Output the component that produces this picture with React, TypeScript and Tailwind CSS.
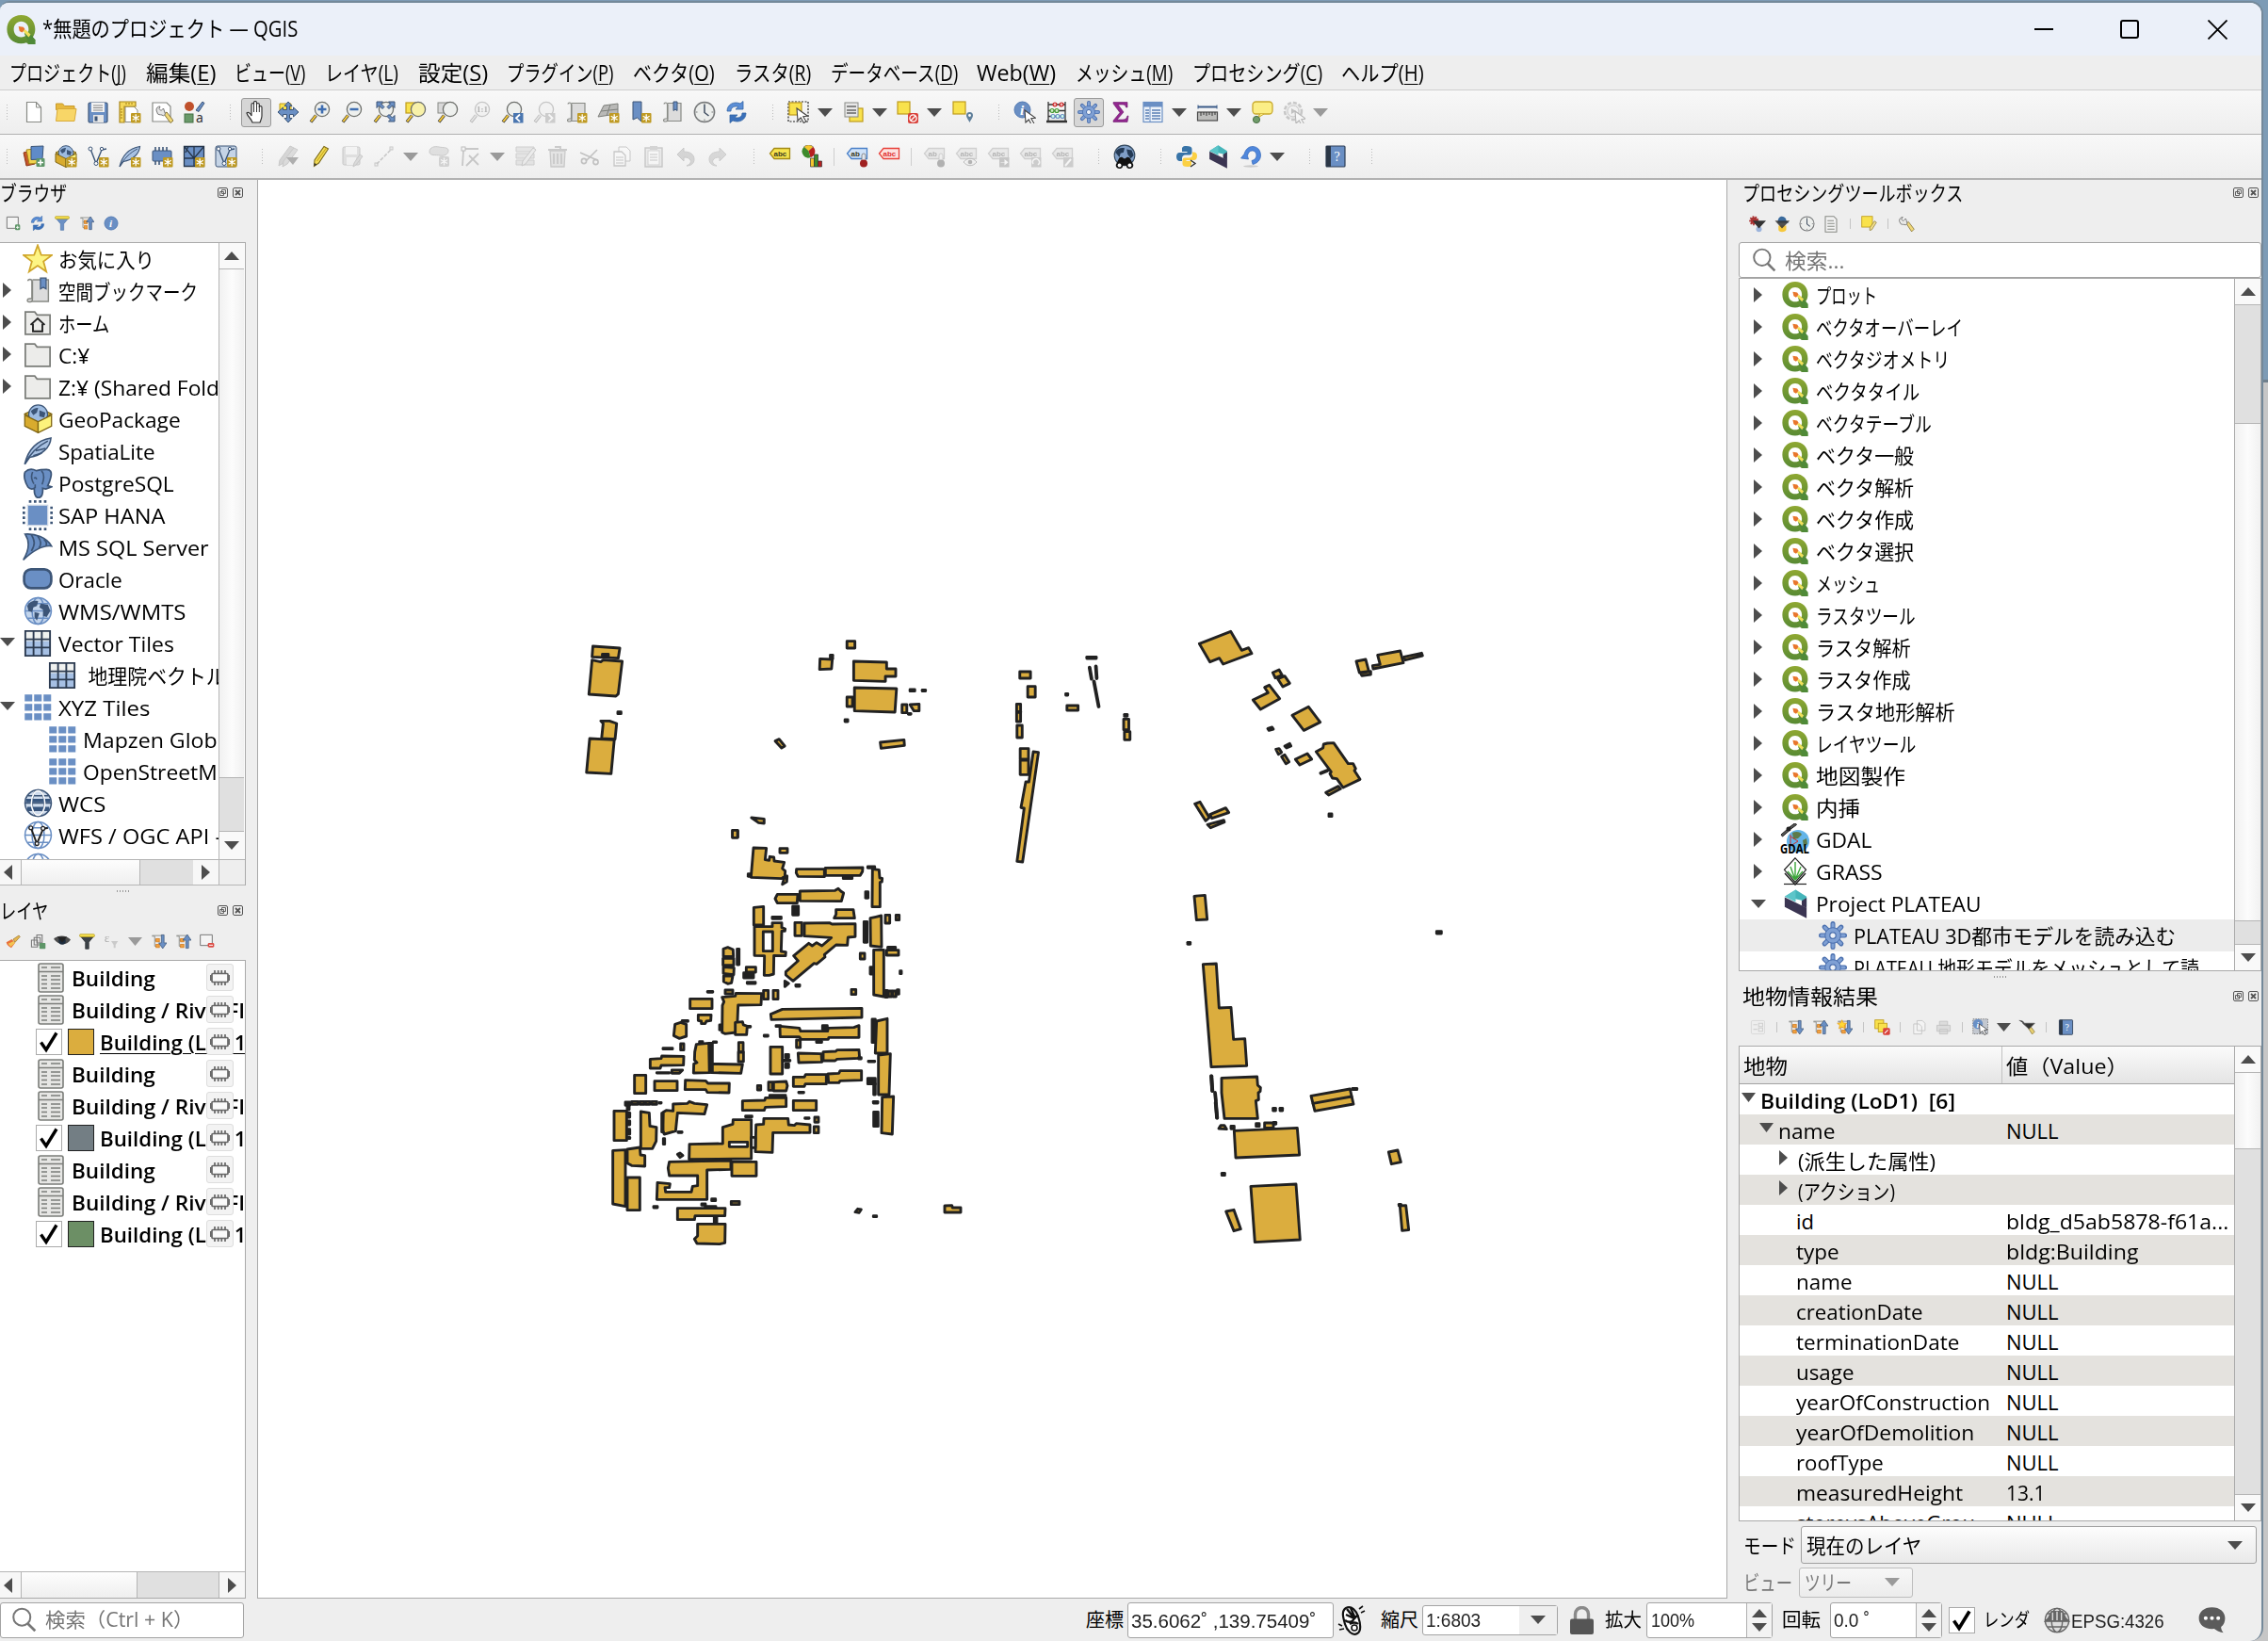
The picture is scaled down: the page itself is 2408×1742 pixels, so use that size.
import React, { useLayoutEffect, useRef, useState } from "react";

type Kids = { children?: React.ReactNode };

/* Text squeezed or stretched horizontally to a given advance width. */
function Fit({ w, children, className = "" }: { w: number; className?: string } & Kids) {
  const ref = useRef<HTMLSpanElement>(null);
  const [s, setS] = useState(1);
  useLayoutEffect(() => {
    if (ref.current && ref.current.offsetWidth) setS(w / ref.current.offsetWidth);
  }, [w]);
  return (
    <span className="inline-block shrink-0 whitespace-pre" style={{ width: w }}>
      <span ref={ref} className={"inline-block origin-left " + className} style={{ transform: `scaleX(${s})` }}>
        {children}
      </span>
    </span>
  );
}

function I({ s = 24, children, dim }: { s?: number; dim?: boolean } & Kids) {
  return (
    <svg viewBox="0 0 24 24" width={s} height={s} className={dim ? "shrink-0 opacity-35 grayscale" : "shrink-0"} fill="none">
      {children}
    </svg>
  );
}

/* ---------- shared icon parts ---------- */
const B = "#6a8fc4";
const D = "#3c5577";
const G = "#888a85";
const Badge = () => (
  <g>
    <rect x="13" y="13" width="10.500" height="10.500" rx="1" fill="#bf9a22" />
    <path d="M18.200 14.200v8M14.700 16.200l7 4M21.700 16.200l-7 4" stroke="#fff" strokeWidth="1.300" />
  </g>
);
const Lens = ({ fill = "#eef0ee" }: { fill?: string }) => (
  <g>
    <path d="M2 22.500l5.500-7" stroke="#3b3b3b" strokeWidth="3.400" />
    <path d="M2.300 22l5-6.300" stroke="#f5c93a" strokeWidth="2" />
    <circle cx="14" cy="9" r="7.600" fill={fill} stroke="#6e706c" strokeWidth="1.300" />
  </g>
);
const Book = ({ x = 0 }: { x?: number }) => (
  <g transform={`translate(${x} 0)`}>
    <path d="M3 3.500c0-2 3.500-2 3.500 0V19H4.500C2 19 2 22 4 22h1c1.500 0 2-1 2-3V3.500M7 2.500h14V21.500H5.500" fill="#dcdcdc" stroke={G} strokeWidth="1.200" />
  </g>
);
const Tree = () => (
  <g>
    <path d="M2 4h4v15M6 10h4M6 19h4" stroke="#8a8c88" strokeWidth="1.300" />
    <rect x="8" y="7.500" width="5" height="5" fill="#f0a040" stroke="#d07818" />
    <rect x="8" y="16" width="5" height="5" fill="#f0a040" stroke="#d07818" />
    <path d="M2 3h18" stroke="#8a8c88" strokeWidth="1.300" />
  </g>
);
const Cursor = ({ x = 10, y = 8 }: { x?: number; y?: number }) => (
  <path transform={`translate(${x} ${y})`} d="M0 0l1 13 3.300-3 3 5.500 2.500-1.500-3-5.200 4.700-.6z" fill="#fff" stroke="#444" strokeWidth="1.100" />
);
const Tag = ({ fill, stroke, t }: { fill: string; stroke: string; t: string }) => (
  <g>
    <path d="M1.500 9L6 3.500h16.500v11H6z" fill={fill} stroke={stroke} strokeWidth="1.300" />
    <text x="5.500" y="12" fontSize="8" fontWeight="700" fontFamily="Liberation Sans, sans-serif" fill={stroke === "#e8403a" ? "#e03030" : "#3a3a20"}>
      {t}
    </text>
  </g>
);
const Therm = () => (
  <g>
    <rect x="17" y="9" width="4" height="10" rx="2" fill="#dfe6ee" stroke="#777" strokeWidth=".8" />
    <circle cx="19" cy="19.500" r="4" fill="#a02020" />
  </g>
);
const GlobeArt = ({ c = B, f = "#dfe8f3" }: { c?: string; f?: string }) => (
  <g stroke={c} strokeWidth="1.200">
    <circle cx="12" cy="12" r="10.800" fill={f} />
    <ellipse cx="12" cy="12" rx="5" ry="10.800" />
    <path d="M1.500 12h21M3.500 6h17M3.500 18h17" />
  </g>
);
const Land = () => (
  <path d="M3 8c2-4 6-5 9-4l-1 4-3 1-1 4-3-1zM9 13l4 1-2 6-2-3zM14 6l6 1 2 5-3 5-3-1 0-5-3-2z" fill={D} />
);

/* ---------- full icons ---------- */
function QLogo({ s = 30 }: { s?: number }) {
  return (
    <I s={s}>
      <defs>
        <linearGradient id="qg" x1="0" y1="0" x2="0" y2="1">
          <stop offset="0" stopColor="#8fa832" />
          <stop offset="1" stopColor="#578a33" />
        </linearGradient>
      </defs>
      <path fillRule="evenodd" fill="url(#qg)" d="M12 0C18.800 0 23.500 4.800 23.500 11.700c0 2.500-.7 4.600-2 6.400l2 2.200V24h-5.600l-1.600-1.300A12 12 0 0 1 12 23.500C5 23.500.3 18.500.3 11.700.3 5 5 0 12 0zm0 5.200C8.300 5.200 5.900 8 5.900 11.700s2.200 6.500 6.100 6.500c3.900 0 6.100-2.800 6.100-6.500S15.700 5.200 12 5.200z" />
      <path d="M14.500 15l3.500-1.500 5.500 6.800V24h-4.500z" fill="#4f8a38" />
      <path d="M13.200 13l5 5.200 1.600-2.400-4.200-3.800z" fill="#f0e05a" />
      <path d="M9.800 9.300l4 .5 1.300 1.900-2.300 2.600-2.200-1.200z" fill="#e8762c" />
    </I>
  );
}
const Gear = ({ s = 24, c = "#7fa0d4" }: { s?: number; c?: string }) => (
  <I s={s}>
    <path d="M12 2v20M2 12h20M4.900 4.900l14.200 14.200M19.100 4.900L4.900 19.100" stroke="#4a6fae" strokeWidth="4" strokeLinecap="round" />
    <path d="M12 2.300v19.400M2.300 12h19.400M5.200 5.200l13.600 13.600M18.800 5.200L5.200 18.800" stroke={c} strokeWidth="2.400" strokeLinecap="round" />
    <circle cx="12" cy="12" r="6.600" fill={c} stroke="#4a6fae" strokeWidth=".8" />
    <circle cx="12" cy="12" r="2.600" fill="#eef2f8" stroke="#4a6fae" strokeWidth="1" />
  </I>
);
const Plateau = ({ s = 24 }: { s?: number }) => (
  <I s={s}>
    <path d="M3 6L12 .300l9 5.700v8l-4-2V9z" fill="#45b5ba" />
    <path d="M12 .3v10.200L3 6z" fill="#5cc5c9" />
    <path d="M3 6.500l18 8.700v8.600L3 14.500z" fill="#3b3552" />
    <path d="M17 9.500l4-2.500v8.500l-4-2z" fill="#3b3552" />
  </I>
);
const Refresh = ({ s = 24 }: { s?: number }) => (
  <I s={s}>
    <path d="M2 11C2 4 9 0 16 3l3-2.500V9h-8l3-2.500C10 5 6 7 6 11z" fill="#5b8ed6" stroke="#3465a4" strokeWidth=".8" />
    <path d="M22 13c0 7-7 11-14 8l-3 2.500V15h8l-3 2.500c4 1.500 8-.5 8-4.500z" fill="#3a70ba" stroke="#3465a4" strokeWidth=".8" />
  </I>
);
const Funnel = ({ s = 24, dark }: { s?: number; dark?: boolean }) => (
  <I s={s}>
    <path d="M1.500 3.500h21L14.500 13v10h-5V13z" fill={dark ? "#3c4248" : B} stroke={dark ? "#25282b" : "#4f76ab"} />
    <rect x="1" y="1" width="22" height="4" rx="1" fill="#f5e04c" stroke="#b89c1a" />
  </I>
);
const Info = ({ s = 24 }: { s?: number }) => (
  <I s={s}>
    <circle cx="12" cy="12" r="10.500" fill={B} stroke="#527ab3" strokeWidth="1.400" />
    <text x="9" y="18" fontSize="17" fontStyle="italic" fontWeight="700" fontFamily="Liberation Serif, serif" fill="#fff">i</text>
  </I>
);
const TreeUp = ({ s = 24 }: { s?: number }) => (
  <I s={s}>
    <Tree />
    <path d="M16 22V10h-4.500L18 1.500l6 8.500h-4v12z" fill={B} stroke={D} />
  </I>
);
const TreeDown = ({ s = 24, star }: { s?: number; star?: boolean }) => (
  <I s={s}>
    <Tree />
    <path d="M16 2v12h-4l6 8.500 6-8.500h-4V2z" fill={B} stroke={D} />
    {star && <path d="M8 1l2 4.500 5 .5-3.700 3.300L12.500 14 8 11.500 3.500 14l1.200-4.700L1 6l5-.5z" fill="#ffd835" stroke="#e59a1c" />}
  </I>
);
const HelpBook = ({ s = 24 }: { s?: number }) => (
  <I s={s}>
    <rect x="2" y="1" width="20" height="22" rx="1" fill={B} stroke="#2e3f56" strokeWidth="1.200" />
    <rect x="2" y="1" width="5" height="22" fill="#2b3746" />
    <text x="10.500" y="17" fontSize="14" fontFamily="Liberation Serif, serif" fill="#fff">?</text>
  </I>
);
const Wrench = ({ s = 24 }: { s?: number }) => (
  <I s={s}>
    <path d="M12 11l3-2.500 8 10.500-3.500 3.500z" fill="#f0d878" stroke="#85733a" strokeWidth="1.100" />
    <path d="M2 7.500c0-3 2-5.500 5-5.500L5 5l2.500 2.500L11 4c2 3 1 5 2.500 7L11 13C8.500 12 6 13 4 11.500z" fill="#e8e8e6" stroke="#777" strokeWidth="1.200" />
  </I>
);
const Clock = ({ s = 24 }: { s?: number }) => (
  <I s={s}>
    <circle cx="12" cy="12" r="10.600" fill="#eceeec" stroke="#77797a" strokeWidth="1.500" />
    <path d="M12 4v8.500l4.500 3.500" stroke="#3f4d60" strokeWidth="1.500" />
    <path d="M12 2.500v2M12 19.500v2M2.500 12h2M19.500 12h2" stroke="#77797a" />
  </I>
);
const Fold = ({ home }: { home?: boolean }) => (
  <I s={30}>
    <path d="M1.500 2.500h8l2 2.500h11v16.500h-21z" fill="#ececea" stroke="#7b7d79" strokeWidth="1.400" />
    {home && <path d="M6 13.500L12 8l6 5.500M8 12.500V19h8v-6.500" stroke="#222" strokeWidth="1.500" />}
  </I>
);
const Star = () => (
  <I s={32}>
    <path d="M12 1l2.800 7.700 8.400.2-6.600 5 2.300 8.100L12 17.300 5.100 22l2.300-8.100-6.600-5 8.400-.2z" fill="#fdf584" stroke="#d0a62a" strokeWidth="1.300" />
  </I>
);
const Feather = ({ s = 24 }: { s?: number }) => (
  <I s={s}>
    <path d="M1 23C3 14 8 4 22.500 1.500 22 9 15 16 5 17.500z" fill="#a8c1e2" stroke={D} strokeWidth="1.200" />
    <path d="M1 23C5 15 12 8 20 4M8 16l7-2M10 12l8-2" stroke={D} strokeWidth="1.200" />
  </I>
);
const GeoPack = ({ s = 24, badge }: { s?: number; badge?: boolean }) => (
  <I s={s}>
    <path d="M1 8l11-5 11 5-11 6z" fill="#e9c84a" stroke="#7f6410" />
    <circle cx="12" cy="8.500" r="7.800" fill="#9dbbe0" stroke={D} />
    <path d="M6 6c2-3 5-3 6-3l-1 4-3 2zM13 5l5 2-1 4-4-1z" fill={D} />
    <path d="M1 9l11 5.500v9L1 18z" fill="#d8ab2e" stroke="#7f6410" />
    <path d="M23 9l-11 5.500v9L23 18z" fill="#fdf27c" stroke="#7f6410" />
    {badge && <Badge />}
  </I>
);
const Elephant = () => (
  <I s={32}>
    <path d="M2 3c3-3 7-2 9-1 3-1 6-1 8-1 3 0 4.500 2 3.500 6-.6 2.500-1.500 5-2.500 7l3 .8-4.500 1.700-2.500-.5c.3 4-.5 7.500-3.500 7.500-2.800 0-3.300-4-3.200-7.500-1.500.8-3.300 1-5-1C2 11.500.5 6 2 3z" fill={B} stroke={D} strokeWidth="1.300" />
    <path d="M8 3c-1.500 3-.5 7 1 9.500M15 2c3 3 2 7 .5 11M10 13v3M9 8c1.500-1 2-.5 2 1" stroke={D} strokeWidth="1.200" />
  </I>
);
const Hana = () => (
  <I s={32}>
    <rect x="4" y="4" width="16" height="16" fill={B} stroke="#c9d4e4" />
    <path d="M5 1h15M5 23h15" stroke={D} strokeWidth="2" strokeDasharray="2 2" />
    <path d="M1 5v15M23 5v15" stroke={D} strokeWidth="2" strokeDasharray="2 2" />
  </I>
);
const Sail = () => (
  <I s={32}>
    <path d="M2 1.500C10 1 19 4 23 11c-7-1-14 3-22.500 11C6 13 5 6 2 1.500z" fill={B} stroke={D} strokeWidth="1.200" />
    <path d="M7 2c3 5 3 8 0 13M12 3c3 4 3 7 1 9.500M17 5.500c2 2 2.500 4 1.500 5.500" stroke={D} strokeWidth="1.300" />
  </I>
);
const Ora = () => (
  <I s={32}>
    <rect x="1.200" y="4" width="21.600" height="15" rx="5.500" fill={B} stroke={D} strokeWidth="2" />
  </I>
);
const GridDark = () => (
  <I s={30}>
    <rect x="1.500" y="1.500" width="21" height="21" fill="#f0f2f0" />
    <rect x="1.500" y="10" width="21" height="12.500" fill="#a6c0e4" />
    <path d="M1.500 1.500h21v21h-21zM8.500 1.500v21M15.500 1.500v21M1.500 8.500h21M1.500 15.500h21" stroke="#2b3a50" strokeWidth="1.500" />
  </I>
);
const GridBlue = () => (
  <I s={30}>
    {[1, 9, 17].map((y) => [1, 9, 17].map((x) => <rect key={x + "-" + y} x={x} y={y} width="6.400" height="5.800" fill={B} />))}
  </I>
);
const VLayer = ({ s = 24, badge, bg }: { s?: number; badge?: boolean; bg?: boolean }) => (
  <I s={s}>
    {bg && <rect x="1" y="1" width="22" height="22" rx="2" fill="#c5d4e6" stroke={D} />}
    <path d="M4 4l6 15.500L16 5l5-1" stroke={D} strokeWidth="1.400" />
    <path d="M4 4m-2 0a2 2 0 1 0 4 0a2 2 0 1 0-4 0M10 19.500m-2 0a2 2 0 1 0 4 0a2 2 0 1 0-4 0M16 4m-1.700 0a1.700 1.700 0 1 0 3.400 0a1.700 1.700 0 1 0-3.400 0" fill="#fff" stroke={D} />
    {badge && <Badge />}
  </I>
);

/* ---------- widgets ---------- */
const Grip = ({ first }: { first?: boolean }) => (
  <div className={first ? "w-[18.5px] shrink-0 pl-[6px]" : "w-8 shrink-0 pl-[20px]"}>
    <div className="h-[18px] w-[4px] bg-[radial-gradient(#bbb_0.8px,transparent_1px)] bg-[length:3px_3px]" />
  </div>
);
const C = ({ children, on }: { on?: boolean } & Kids) => (
  <div className="flex w-[34px] shrink-0 items-center justify-center">
    {on ? <div className="flex h-[31px] w-[32px] items-center justify-center rounded-[3px] border border-[#9a9a9a] bg-[#d6d6d6]">{children}</div> : children}
  </div>
);
const Tri = ({ c = "#4d4d4d", w = 16, h = 9 }: { c?: string; w?: number; h?: number }) => (
  <svg width={w} height={h} viewBox="0 0 16 9" preserveAspectRatio="none" className="shrink-0">
    <path d="M0 0h16L8 9z" fill={c} />
  </svg>
);
const TriUp = () => (
  <svg width={16} height={9} viewBox="0 0 16 9" className="shrink-0">
    <path d="M0 9h16L8 0z" fill="#4d4d4d" />
  </svg>
);
const TriR = () => (
  <svg width={9} height={16} viewBox="0 0 9 16" className="shrink-0">
    <path d="M0 0v16l9-8z" fill="#4d4d4d" />
  </svg>
);
const TriL = () => (
  <svg width={9} height={16} viewBox="0 0 9 16" className="shrink-0">
    <path d="M9 0v16L0 8z" fill="#4d4d4d" />
  </svg>
);
const DD = ({ dim }: { dim?: boolean }) => (
  <div className="flex w-6 shrink-0 justify-center pr-[2px]">
    <Tri c={dim ? "#9a9a9a" : "#4d4d4d"} />
  </div>
);
const Sep = () => (
  <div className="flex w-[14px] shrink-0 justify-center">
    <div className="h-[19px] w-px bg-[#cfcfcf]" />
  </div>
);

const Sq = ({ x = 2, y = 1, s = 14 }: { x?: number; y?: number; s?: number }) => (
  <rect x={x} y={y} width={s} height={s} fill="#f9e24c" stroke="#bf9c1c" strokeWidth="1.200" />
);

function ToolbarOne() {
  return (
    <div className="flex h-[47px] shrink-0 items-center border-b border-[#b1b1b1] bg-gradient-to-b from-[#f8f8f8] to-[#eeeeee]">
      <Grip first />
      <C><I><path d="M4.500 1.500h10l5 5.500v15.500h-15z" fill="#fff" stroke={G} strokeWidth="1.200" /><path d="M14.500 1.500V7h5" stroke={G} /></I></C>
      <C><I><path d="M1.500 3h7l2 2.500H21v4H1.500z" fill="#e7b93e" stroke="#c99a2c" /><path d="M1.500 21.500L3 8.500h20l-2 13z" fill="#f8d667" stroke="#d8aa3a" /></I></C>
      <C><I><rect x="2" y="2" width="20" height="21" rx="1.500" fill={B} stroke={D} strokeWidth="1.200" /><rect x="5" y="2" width="14" height="10" fill="#f2f2f2" /><path d="M7 5h10M7 7.500h10M7 10h10" stroke="#888" /><rect x="7" y="15" width="11" height="8" fill="#e6e6e6" /><rect x="8.500" y="16.500" width="3" height="5" fill={D} /></I></C>
      <C><I><path d="M7 6h9l4 4v12.500H7z" fill="#fff" stroke={G} /><path d="M1 1h17v5H6v17H1z" fill="#f5d85a" stroke="#a8851a" strokeWidth="1.200" /><path d="M8 2v2M11 2v2M14 2v2M2 9h2M2 12h2M2 15h2M2 18h2" stroke="#a07c12" /><Badge /></I></C>
      <C><I><path d="M2 2h15l4 4v16H2z" fill="#fff" stroke={G} strokeWidth="1.200" /><path d="M14 14l3-2 7 9-3 2.500z" fill="#f0d878" stroke="#85733a" /><path d="M6 10c0-3 2-4 4-4L9 8.500l2 2L13.500 8c1 2 1 4 2 6l-2 2c-2-2-4-.5-6-2z" fill="#e6e6e6" stroke="#777" /></I></C>
      <C><I><circle cx="7" cy="6" r="5" fill="#c0512c" /><path d="M14 10l7-9 2 1.500-6 9z" fill={B} stroke={D} /><rect x="2" y="14" width="9" height="9" fill="#6a9a6a" stroke="#457045" /><text x="14" y="23" fontSize="14" fontFamily="Noto Sans, sans-serif" fill="#333">a</text></I></C>
      <Grip />
      <C on><I><path d="M8 23c-1-4-5-6-6-10 1.500-1.500 3.500 0 5 3V4c0-2 2.500-2 2.500 0V2c0-2 3-2 3 0v2c0-2 2.800-2 2.800 0v3c0-2 2.700-1.700 2.700 0v9c0 3-1.500 5-2 7z" fill="#fff" stroke="#333" strokeWidth="1.200" /><path d="M9.500 4v8M12.500 4v8M15.300 6v6" stroke="#333" /></I></C>
      <C><I><path d="M3 3h12v10H3z" fill="#f9e24c" stroke="#bf9c1c" /><path d="M12 1l4 4.500h-2.500v4h4V7L23 12l-5.500 5v-2.500h-4v4H16L12 23l-4-4.500h2.500v-4h-4V17L1 12l5.500-5v2.500h4v-4H8z" fill={B} stroke={D} /></I></C>
      <C><I><Lens /><path d="M14 4.500v9M9.500 9h9" stroke="#3e6db0" strokeWidth="2.600" /></I></C>
      <C><I><Lens /><path d="M9.500 9h9" stroke="#3e6db0" strokeWidth="2.600" /></I></C>
      <C><I><Lens /><path d="M4 1h6.500L8.500 3l3.500 3.500L10 8.500 6.500 5 4 7.500zM23 1v6.500L20.500 5 17 8.500 15 6.500 18.500 3l-2-2zM23 22h-6.500l2-2L15 16.500l2-2 3.500 3.500 2.500-2.500zM10.500 10.500" fill={B} stroke={D} /></I></C>
      <C><I><Sq x={1} y={2} s={11} /><Lens fill="#f8f1a8" /></I></C>
      <C><I><rect x="1" y="2" width="11" height="11" fill="#d8d8d8" stroke={G} /><Lens /></I></C>
      <C><I dim><Lens /><text x="8" y="12" fontSize="9" fontWeight="700" fontFamily="Liberation Serif, serif" fill="#333">1:1</text></I></C>
      <C><I><Lens /><rect x="13" y="13" width="10.500" height="10.500" fill="#4a76b0" /><path d="M20 14.500l-4 3.800 4 3.800" stroke="#fff" strokeWidth="1.800" /></I></C>
      <C><I dim><Lens /><rect x="13" y="13" width="10.500" height="10.500" fill="#888" /><path d="M16.500 14.500l4 3.800-4 3.800" stroke="#fff" strokeWidth="1.800" /></I></C>
      <C><I><Book /><Badge /></I></C>
      <C><I><path d="M1 17L7 5l15-2v14l-8-2z" fill="#b9b9b7" stroke="#7d7f7b" /><path d="M4 11l18-2M14 4L10 16" stroke="#7d7f7b" /><Badge /></I></C>
      <C><I><path d="M4 1h9v21l-4.500-4L4 20z" fill={B} stroke={D} /><Badge /></I></C>
      <C><I><Book /><path d="M13 1h4v9.500l-2-1.500-2 1.500z" fill={B} stroke={D} /></I></C>
      <C><Clock /></C>
      <C><Refresh /></C>
      <Grip />
      <C><I><rect x="1" y="1" width="21" height="21" stroke="#222" strokeWidth="1.200" strokeDasharray="2 1.500" /><Sq x={2} y={2} s={13} /><Cursor /></I></C>
      <DD />
      <C><I><Sq x={8} y={8} s={14} /><rect x="3" y="2" width="14" height="15" fill="#e8e8e8" stroke={G} /><path d="M5 6h10M5 10h10M5 13h10" stroke="#666" strokeWidth="1.300" /></I></C>
      <DD />
      <C><I><Sq x={1} y={1} s={13} /><rect x="12" y="13" width="11" height="11" rx="2" fill="#d9413a" /><circle cx="17.500" cy="18.500" r="3.600" stroke="#fff" strokeWidth="1.300" /><path d="M15 21l5-5" stroke="#fff" strokeWidth="1.300" /></I></C>
      <DD />
      <C><I><Sq x={2} y={1} s={13} /><path d="M19.500 23c-2-4-3.500-5.500-3.500-7.500a3.500 3.500 0 0 1 7 0c0 2-1.500 3.500-3.500 7.500z" fill="#5f7f9a" /><circle cx="19.500" cy="15.500" r="1.400" fill="#fff" /></I></C>
      <Grip />
      <C><I><circle cx="9.500" cy="9.500" r="8.500" fill={B} stroke="#527ab3" /><text x="7" y="15" fontSize="15" fontStyle="italic" fontWeight="700" fontFamily="Liberation Serif, serif" fill="#fff">i</text><Cursor x={12} y={10} /></I></C>
      <C><I><path d="M3 1v21M21 1v21M3 4h18M3 10.500h18M3 16.500h18" stroke="#333" strokeWidth="1.300" /><path d="M1 22h22" stroke="#333" strokeWidth="2.400" /><g strokeWidth="1.200"><circle cx="10" cy="4" r="2" fill="#f2b5b5" stroke="#c22" /><circle cx="17" cy="4" r="2" fill="#f2b5b5" stroke="#c22" /><circle cx="7" cy="10.500" r="2" fill="#cdeac6" stroke="#493" /><circle cx="12" cy="10.500" r="2" fill="#cdeac6" stroke="#493" /><circle cx="8" cy="16.500" r="2" fill="#cfe" stroke={B} /><circle cx="13" cy="16.500" r="2" fill="#cfe" stroke={B} /><circle cx="18" cy="16.500" r="2" fill="#cfe" stroke={B} /></g></I></C>
      <C on><Gear s={24} /></C>
      <C><I><path d="M4 1.500h15V7h-1.500C17 4.500 16 4 13 4H9l6 8-7 8h6c3 0 4-1 5-4h1l-1 6.500H4v-1.500L11 12.500 4 3z" fill="#92278f" stroke="#6b1a6b" strokeWidth=".6" /></I></C>
      <C><I><rect x="2" y="1.500" width="20" height="21" fill="#eef3fa" stroke={B} strokeWidth="1.200" /><rect x="2" y="1.500" width="20" height="5" fill={B} /><path d="M9 1.500v21" stroke={B} /><path d="M4 10h4M4 13h4M4 16h4M4 19h4M11 10h9M11 13h9M11 16h9M11 19h9" stroke="#5a7fb4" strokeWidth="1.400" /></I></C>
      <DD />
      <C><I><path d="M2 6.500h20" stroke="#3b5b88" strokeWidth="2.200" /><path d="M2 4.500v4M22 4.500v4" stroke="#3b5b88" /><rect x="1.500" y="12" width="21" height="9" fill="#bdbdbb" stroke="#4a4a4a" strokeWidth="1.200" /><path d="M5 12v4M8 12v3M11 12v4M14 12v3M17 12v4M20 12v3" stroke="#333" /></I></C>
      <DD />
      <C><I><rect x="2" y="1" width="21" height="13" rx="3.500" fill="#fbee86" stroke="#c9a92c" strokeWidth="1.300" /><path d="M10 14l-4 5 8-5" fill="#fbee86" stroke="#c9a92c" /><circle cx="6" cy="20" r="3.600" fill="#6f9c69" stroke="#4b6f46" /></I></C>
      <C><I dim><circle cx="11" cy="11" r="9" fill="#ddd" stroke="#777" strokeWidth="2.500" strokeDasharray="4 2" /><circle cx="11" cy="11" r="6" fill="#eee" stroke="#777" /><path d="M9 8l5 3-5 3z" fill="#666" /><Cursor x={13} y={11} /></I></C>
      <DD dim />
    </div>
  );
}

const DimTag = ({ children, t = "abc" }: { t?: string } & Kids) => (
  <I dim>
    <Tag fill="#d8d6c8" stroke="#8f8f80" t={t} />
    {children}
  </I>
);

function ToolbarTwo() {
  return (
    <div className="flex h-[48px] shrink-0 items-center border-b-2 border-[#b1b1b1] bg-gradient-to-b from-[#f8f8f8] to-[#eeeeee]">
      <Grip first />
      <C><I><path d="M1 8l8-2 4 14-9 2z" fill="#c4542c" stroke="#8c3512" /><path d="M4 5l9-1 3 15-9 1z" fill="#f2d34e" stroke="#a8871a" /><path d="M9 1.500l13-.5-1 14-12 .5z" fill="#5f8bc8" stroke={D} /><rect x="14.500" y="14" width="9" height="9" rx="1" fill="#5e9668" /><path d="M19 15.500v6M16 18.500h6" stroke="#fff" strokeWidth="1.600" /></I></C>
      <C><GeoPack badge /></C>
      <C><VLayer badge /></C>
      <C><I><path d="M1 23C3 14 8 4 22.500 1.500 22 9 15 16 5 17.500z" fill="#a8c1e2" stroke={D} strokeWidth="1.200" /><path d="M1 23C5 15 12 8 20 4" stroke={D} /><Badge /></I></C>
      <C><I><rect x="2" y="6" width="20" height="11" rx="1" fill={B} stroke={D} /><path d="M5 2v4M9 2v4M13 2v4M17 2v4M5 17v4M9 17v4" stroke={D} strokeWidth="1.600" /><Badge /></I></C>
      <C><I><rect x="1.500" y="1.500" width="21" height="21" fill={B} /><path d="M1.500 1.500h21v21h-21zM12 1.500v21M1.500 14h21M1.500 1.500L12 14M12 14L22.500 1.500M6 1.500L3 8" stroke="#26364b" strokeWidth="1.300" /><Badge /></I></C>
      <C><VLayer badge bg /></C>
      <Grip />
      <C><I dim><path d="M14 1l4 2L7 19l-5 3 1-6z" fill="#b98" stroke="#876" /><path d="M18 3l4 2-11 15-5 3 1-6z" fill="#caa" stroke="#876" /><path d="M10 13h13l-6 8z" fill="#333" /></I></C>
      <C><I><path d="M16 1.500l4.500 2.500L10.500 19l-5 3.500.5-6.500z" fill="#f3dc55" stroke="#7c6a18" strokeWidth="1.100" /><path d="M8.500 17L18.500 3" stroke="#c9a91e" strokeWidth="1.200" /><path d="M5.500 22.500l.3-3.500 2.500 1.500z" fill="#333" /></I></C>
      <C><I dim><rect x="2" y="2" width="18" height="19" rx="1.500" fill="#bbb" stroke="#777" /><rect x="5" y="2" width="12" height="8" fill="#f2f2f2" /><rect x="6" y="13" width="10" height="8" fill="#eee" /><path d="M20 10l3 2-7 9-3 2 1-4z" fill="#ca9" stroke="#876" /></I></C>
      <C><I dim><path d="M4 20L20 4" stroke="#777" strokeWidth="1.500" strokeDasharray="4 1.500" /><rect x="2" y="19" width="3" height="3" stroke="#777" /><rect x="18" y="2" width="3" height="3" stroke="#777" /></I></C>
      <DD dim />
      <C><I dim><path d="M2 7c0-5 6-6 10-5 5 1 10 0 10 4s-5 6-9 5-11 1-11-4z" fill="#bbb" stroke="#777" /><rect x="12" y="12" width="11" height="11" rx="2" fill="#999" /><path d="M17.500 13.500v8M14 15.500l7 4M21 15.500l-7 4" stroke="#fff" strokeWidth="1.200" /></I></C>
      <C><I dim><path d="M4 6l-1 16M6 4h14M10 11l10 10M20 9L7 22" stroke="#777" strokeWidth="1.800" /><rect x="2" y="2" width="4" height="4" stroke="#555" /></I></C>
      <DD dim />
      <C><I dim><path d="M2 2h19v5H2zM2 9h19v5H2zM2 16h19v5H2z" fill="#cccbb8" stroke="#888" /><path d="M20 3l3 2-11 15-4 2 1-5z" fill="#ddd" stroke="#777" /></I></C>
      <C><I dim><path d="M4 6h16l-1 17H5z" fill="#d8c4c4" stroke="#977" strokeWidth="1.300" /><path d="M2 5h20M9 2h6v3M8 9v11M12 9v11M16 9v11" stroke="#977" strokeWidth="1.800" /></I></C>
      <C><I dim><path d="M2 8l18 8M8 17L20 5" stroke="#666" strokeWidth="1.600" /><circle cx="18.500" cy="18" r="2.600" stroke="#666" strokeWidth="1.600" /><circle cx="6" cy="17" r="2.600" stroke="#666" strokeWidth="1.600" /></I></C>
      <C><I dim><path d="M9 2h8l4 4v11H9z" fill="#fff" stroke="#777" /><path d="M4 7h8l4 4v11H4z" fill="#fff" stroke="#777" strokeWidth="1.300" /><path d="M6 13h8M6 16h8M6 19h8" stroke="#777" /></I></C>
      <C><I dim><rect x="3" y="3" width="18" height="20" fill="#ddd" stroke="#777" strokeWidth="1.400" /><rect x="6" y="6" width="12" height="15" fill="#fff" stroke="#999" /><rect x="8" y="1" width="8" height="4" fill="#999" /><path d="M8 10h8M8 13h8M8 16h8" stroke="#777" /></I></C>
      <C><I dim><path d="M3 10l7-7v4c7 0 11 3 11 8s-4 7-8 7c4-2 5-4 4-6-1-2-3-3-7-3v4z" fill="#a89c8c" stroke="#887c6c" /></I></C>
      <C><I dim><path d="M21 10l-7-7v4C7 7 3 10 3 15s4 7 8 7c-4-2-5-4-4-6 1-2 3-3 7-3v4z" fill="#9ca8a0" stroke="#7c887c" /></I></C>
      <Grip />
      <C><I><Tag fill="#f7e44e" stroke="#a38a17" t="abc" /></I></C>
      <C><I><path d="M8.500 6.500L3.500 2a6.800 6.800 0 0 1 10 0z" fill="#f5c52c" stroke="#555" strokeWidth=".6" /><path d="M8.500 6.500l5-4.500a6.800 6.800 0 0 1-3 11.200z" fill="#b62020" /><path d="M8.500 6.500l2 6.700A6.800 6.800 0 0 1 3.500 2z" fill="#3d8a2c" /><path d="M10.500 14h4v9h-4z" fill="#f5c52c" stroke="#333" strokeWidth=".7" /><path d="M14.500 10h4v13h-4z" fill="#3d8a2c" stroke="#333" strokeWidth=".7" /><path d="M18.500 17h4v6h-4z" fill="#b62020" stroke="#333" strokeWidth=".7" /></I></C>
      <Sep />
      <C><I><Tag fill="#cfe2f8" stroke="#4a80c8" t="ab" /><Therm /></I></C>
      <C><I><Tag fill="#fde2e0" stroke="#e8403a" t="abc" /></I></C>
      <Sep />
      <C><DimTag t="ab"><Therm /></DimTag></C>
      <C><DimTag><path d="M9 18c4-5 10-5 14 0-4 5-10 5-14 0z" fill="#eee" stroke="#555" /><circle cx="16" cy="18" r="2.300" fill="#444" /></DimTag></C>
      <C><DimTag><rect x="13" y="13" width="10.500" height="10.500" fill="#777" /><path d="M14.500 18h4v-3l4 3.300-4 3.300v-3h-4z" fill="#fff" /></DimTag></C>
      <C><DimTag><rect x="13" y="13" width="10.500" height="10.500" fill="#888" /><path d="M15 20a3.500 3.500 0 1 1 5 1" stroke="#fff" strokeWidth="1.500" /></DimTag></C>
      <C><DimTag><rect x="13" y="13" width="10.500" height="10.500" fill="#888" /><path d="M15 22l6-7" stroke="#fff" strokeWidth="2" /></DimTag></C>
      <Grip />
      <C><I s={26}><circle cx="12" cy="11" r="10" fill="#7f9ec6" stroke="#34495e" /><path d="M3 8c2-4 6-5 9-4l-1 4-3 1-1 4zM14 5l5 1 2 5-3 3-3-4z" fill="#243a55" /><path d="M6 15c1-3 4-3 5-1h2c1-2 4-2 5 1l2.500 5a3.500 3.500 0 1 1-7 1h-3a3.500 3.500 0 1 1-7-1z" fill="#111" /><circle cx="7" cy="20.800" r="1.800" fill="#fff" /><circle cx="17" cy="20.800" r="1.800" fill="#fff" /></I></C>
      <Grip />
      <C><I><path d="M11.500 1C7 1 7 3 7 4.500V7h5.500v1H4.500C2 8 1 10 1 12.500S2.500 17 4.500 17H7v-3c0-2 1.500-3.500 3.500-3.500H15c1.500 0 2.500-1 2.500-2.500V4c0-2-2-3-6-3z" fill="#3874a8" /><path d="M12.500 23c4.500 0 4.500-2 4.500-3.500V17h-5.500v-1h8c2.500 0 3.500-2 3.500-4.500S21.500 7.500 19.500 7.500H18v3c0 2-1.500 3-3.500 3H10c-1.500 0-2.500 1-2.500 2.500v4c0 2 1.500 3 5 3z" fill="#fbd043" /><path d="M16 16l5 3.500-5 3.500" stroke="#333" strokeWidth="1.400" /></I></C>
      <C><Plateau s={25} /></C>
      <C><I><path d="M5 9.500L1.500 14l8 1-1-3.500C9 8 11 6 13.500 6c3 0 4.500 2.500 4.500 5s-2 5-5 5.500l1 4c5-1 8.500-5 8.500-9.500 0-6-4-9.500-8.500-9.500S6.500 4.500 5 9.500z" fill="#4f87dc" stroke="#3467b8" strokeWidth=".7" /><ellipse cx="12" cy="22.500" rx="8" ry="1.200" fill="#ccc" /></I></C>
      <DD />
      <Grip />
      <C><HelpBook /></C>
      <Grip />
    </div>
  );
}

/* ---------- dock pieces ---------- */
const DockButtons = () => (
  <div className="flex gap-[5px]">
    <svg width="11" height="11" viewBox="0 0 11 11" fill="none" stroke="#555"><rect x=".5" y=".5" width="10" height="10" rx="1.500" /><path d="M4.500 2.500h4v4h-4zM2.500 4.500h4v4h-4z" strokeWidth=".9" /></svg>
    <svg width="11" height="11" viewBox="0 0 11 11" fill="none" stroke="#555"><rect x=".5" y=".5" width="10" height="10" rx="1.500" /><path d="M3 3l5 5M8 3L3 8" strokeWidth="1.800" /></svg>
  </div>
);
const S = ({ children }: Kids) => <div className="flex w-[26px] shrink-0 items-center justify-center">{children}</div>;
const SSep = ({ c = "w-[17px]" }: { c?: string }) => (
  <div className={"flex shrink-0 justify-center " + c}>
    <div className="h-[11px] w-px bg-[#c4c4c4]" />
  </div>
);

function Row({ arrow, icon, t, w, lvl = 0 }: { arrow?: "r" | "d"; icon: React.ReactNode; t: string; w: number; lvl?: number }) {
  return (
    <div className="flex h-[34px] shrink-0 items-center">
      {lvl > 0 && <div className="w-[26px] shrink-0" />}
      <div className="flex w-[24px] shrink-0 items-center pb-[3px]">
        {arrow === "r" && <div className="pl-[3px]"><TriR /></div>}
        {arrow === "d" && <Tri />}
      </div>
      <div className="flex w-8 shrink-0 justify-center pb-px">{icon}</div>
      <div className="w-[6px] shrink-0" />
      <Fit w={w}>{t}</Fit>
    </div>
  );
}

const thumbV = "bg-gradient-to-r from-[#f1f1f1] via-[#fcfcfc] to-[#f1f1f1]";
const thumbH = "bg-gradient-to-b from-[#fdfdfd] to-[#efefef]";

function BrowserDock() {
  return (
    <div className="flex h-[749px] shrink-0 flex-col">
      <div className="flex h-[27px] shrink-0 items-center justify-between pr-[3px]">
        <Fit w={71}>ブラウザ</Fit>
        <DockButtons />
      </div>
      <div className="flex h-[39px] shrink-0 items-center pb-[2px] pl-px">
        <S><I s={16}><path d="M2 2h18v18H2z" stroke="#777" strokeWidth="1.500" fill="#f4f4f4" /><rect x="15" y="14" width="8" height="9" rx="2" fill="#5e9668" /><path d="M19 16v5M16.500 18.500h5" stroke="#fff" strokeWidth="1.300" /></I></S>
        <S><Refresh s={16} /></S>
        <S><Funnel s={16} /></S>
        <S><TreeUp s={16} /></S>
        <S><Info s={16} /></S>
      </div>
      <div className="flex h-[683px] shrink-0 flex-col border-t border-r border-[#aaa] bg-white">
        <div className="flex h-[654px] shrink-0">
          <div className="flex w-[232px] shrink-0 flex-col overflow-hidden">
            <Row icon={<Star />} t="お気に入り" w={102} />
            <Row arrow="r" icon={<I s={29}><Book /><path d="M14 1h5v9.500l-2.500-1.500-2.500 1.500z" fill={B} stroke={D} /></I>} t="空間ブックマーク" w={148} />
            <Row arrow="r" icon={<Fold home />} t="ホーム" w={54} />
            <Row arrow="r" icon={<Fold />} t="C:¥" w={33} />
            <Row arrow="r" icon={<Fold />} t="Z:¥ (Shared Fold" w={171} />
            <Row icon={<GeoPack s={31} />} t="GeoPackage" w={130} />
            <Row icon={<Feather s={31} />} t="SpatiaLite" w={103} />
            <Row icon={<Elephant />} t="PostgreSQL" w={123} />
            <Row icon={<Hana />} t="SAP HANA" w={114} />
            <Row icon={<Sail />} t="MS SQL Server" w={160} />
            <Row icon={<Ora />} t="Oracle" w={68} />
            <Row icon={<I s={31}><GlobeArt f="#c3d5ec" /><Land /></I>} t="WMS/WMTS" w={136} />
            <Row arrow="d" icon={<GridDark />} t="Vector Tiles" w={123} />
            <Row lvl={1} icon={<GridDark />} t=" 地理院ベクトル" w={152} />
            <Row arrow="d" icon={<GridBlue />} t="XYZ Tiles" w={97} />
            <Row lvl={1} icon={<GridBlue />} t="Mapzen Glob" w={143} />
            <Row lvl={1} icon={<GridBlue />} t="OpenStreetM" w={143} />
            <Row icon={<I s={31}><GlobeArt c={D} f="#cfdced" /><path d="M2 8.500h20v3H2zM3 15h18v3H3z" fill="#37567f" /><ellipse cx="12" cy="12" rx="5.500" ry="10" stroke="#fff" strokeWidth="1.200" /></I>} t="WCS" w={50} />
            <Row icon={<I s={31}><GlobeArt c={B} f="#fff" /><path d="M6 6l5 13 5-12 4-1" stroke="#222" strokeWidth="1.500" /><circle cx="6" cy="6" r="1.500" fill="#fff" stroke="#222" /><circle cx="11" cy="19" r="1.500" fill="#fff" stroke="#222" /><circle cx="16" cy="6.500" r="1.500" fill="#fff" stroke="#222" /></I>} t="WFS / OGC API -" w={174} />
            <Row icon={<I s={31}><GlobeArt f="#fff" /></I>} t=" " w={8} />
          </div>
          <div className="flex w-[27px] shrink-0 flex-col border-l border-[#b5b5b5]">
            <div className="flex h-[28px] shrink-0 items-center justify-center border-b border-[#b5b5b5] bg-[#f9f9f9]"><TriUp /></div>
            <div className={"h-[540px] shrink-0 border-b border-[#b5b5b5] " + thumbV} />
            <div className="h-[57px] shrink-0 border-b border-[#b5b5b5] bg-[#e0e0e0]" />
            <div className="flex flex-1 items-center justify-center bg-[#f9f9f9]"><Tri /></div>
          </div>
        </div>
        <div className="flex flex-1 border-t border-b border-[#b5b5b5]">
          <div className="flex w-[23px] shrink-0 items-center border-r border-[#b5b5b5] bg-[#f7f7f7] pl-[4px]"><TriL /></div>
          <div className={"w-[126px] shrink-0 border-r border-[#b5b5b5] " + thumbH} />
          <div className="w-[56px] shrink-0 bg-[#e0e0e0]" />
          <div className="flex w-[28px] shrink-0 items-center justify-center border-r border-[#b5b5b5] bg-[#f7f7f7]"><TriR /></div>
          <div className="flex-1 bg-[#eee]" />
        </div>
      </div>
    </div>
  );
}

function LayerRow({ kind, color, sel }: { kind: "a" | "b" | "c"; color?: string; sel?: boolean }) {
  return (
    <div className="relative flex h-[34px] shrink-0 items-center overflow-hidden font-semibold">
      {kind === "c" ? (
        <>
          <div className="ml-[38px] flex h-[28px] w-[28px] shrink-0 items-center justify-center border border-[#aaa] bg-white">
            <svg width="22" height="24" viewBox="0 0 22 24" fill="none" stroke="#000" strokeWidth="3.400"><path d="M2.500 12.500l5.500 8L19 2.500" /></svg>
          </div>
          <div className={"mr-[6px] ml-[6px] h-[28px] w-[28px] shrink-0 border border-[#222] " + (color ?? "")} />
          <Fit w={156} className={sel ? "underline decoration-1 underline-offset-[3px]" : ""}>Building (LoD1</Fit>
        </>
      ) : (
        <>
          <div className="mr-[8px] ml-[40px] flex h-[32px] w-[28px] shrink-0 items-center">
            <svg width="28" height="32" viewBox="0 0 28 32" fill="#e6e6e4" stroke="#7b7d79" strokeWidth="1.600"><rect x="1" y="1" width="26" height="30" rx="2" /><path d="M1 9.500h26M4 5h6M14 5h10M4 14h6M14 14h10M4 18h6M14 18h10M4 22.500h6M14 22.500h10M4 27h6M14 27h10" strokeWidth="1.500" /></svg>
          </div>
          {kind === "a" ? <Fit w={89}>Building</Fit> : <Fit w={184}>Building / RiverFl</Fit>}
        </>
      )}
      <div className="absolute top-[2px] left-[219px] flex h-[29px] w-[29px] items-center justify-center rounded-[3px] border border-[#ddd] bg-[#f3f3f3]">
        <svg width="21" height="18" viewBox="0 0 21 18" fill="none" stroke="#666" strokeWidth="1.700"><rect x="2" y="4.500" width="17" height="9" rx="1" fill="#fafafa" /><path d="M5 1v3.500M8.700 1v3.500M12.300 1v3.500M16 1v3.500M5 13.500V17M8.700 13.500V17M12.300 13.500V17M16 13.500V17M.8 6v6M20.200 6v6" /></svg>
      </div>
    </div>
  );
}

function LayersDock() {
  return (
    <div className="flex flex-1 flex-col">
      <div className="flex h-[12px] shrink-0 items-center justify-center"><div className="h-[2px] w-[16px] bg-[radial-gradient(#999_0.8px,transparent_1px)] bg-[length:3px_2px]" /></div>
      <div className="flex h-[28px] shrink-0 items-center justify-between pr-[3px]">
        <Fit w={51}>レイヤ</Fit>
        <DockButtons />
      </div>
      <div className="flex h-[39px] shrink-0 items-center pb-px pl-px">
        <S><I s={16}><path d="M1 14l9-5 5 6-6 8C6 21 2 19 1 14z" fill="#e9703a" /><path d="M4 16l9-4 2 3-7 6z" fill="#f3c552" /><path d="M12 9l9-6 2 2-8 9z" fill="#e5b64c" stroke="#96702a" /></I></S>
        <S><I s={17}><path d="M2 10h9v10H2zM6 6h9v11H6zM10 2h8v12h-8z" fill="#eee" stroke="#777" strokeWidth="1.500" /><rect x="14" y="14" width="9" height="9" rx="1" fill="#5e9668" /></I></S>
        <S><I s={18}><path d="M0 9c7-6 17-6 24 1-5 8-16 9-24-1z" fill="#4c4c4c" /><circle cx="12" cy="12" r="5" fill="#1d2c3d" /><path d="M5 6h14l-7 8z" fill="#222" /></I></S>
        <S><Funnel s={17} dark /></S>
        <S><I s={16} dim><text x="1" y="14" fontSize="20" fontFamily="Liberation Serif, serif" fill="#333">ε</text><path d="M12 12h11l-4 6v5h-3v-5z" fill="#888" /></I></S>
        <div className="flex w-[24px] shrink-0 justify-center"><Tri c="#9a9a9a" w={15} h={9} /></div>
        <S><TreeDown s={17} /></S>
        <S><TreeUp s={17} /></S>
        <S><I s={16}><path d="M1 2h19v17H1z" stroke="#777" strokeWidth="1.500" fill="#f4f4f4" /><rect x="13" y="15" width="10" height="7" rx="2" fill="#dc4b44" /><path d="M15 18.500h6" stroke="#fff" strokeWidth="1.500" /></I></S>
      </div>
      <div className="flex flex-1 flex-col border-t border-r border-b border-[#aaa] bg-white">
        <div className="flex flex-1 flex-col pt-px">
          <LayerRow kind="a" />
          <LayerRow kind="b" />
          <LayerRow kind="c" color="bg-[#dbad3e]" sel />
          <LayerRow kind="a" />
          <LayerRow kind="b" />
          <LayerRow kind="c" color="bg-[#737e84]" />
          <LayerRow kind="a" />
          <LayerRow kind="b" />
          <LayerRow kind="c" color="bg-[#6c8f65]" />
        </div>
        <div className="flex h-[28px] shrink-0 border-t border-[#b5b5b5]">
          <div className="flex w-[23px] shrink-0 items-center border-r border-[#b5b5b5] bg-[#f7f7f7] pl-[4px]"><TriL /></div>
          <div className={"w-[123px] shrink-0 border-r border-[#b5b5b5] " + thumbH} />
          <div className="w-[87px] shrink-0 border-r border-[#b5b5b5] bg-[#e0e0e0]" />
          <div className="flex flex-1 items-center justify-center bg-[#f7f7f7]"><TriR /></div>
        </div>
      </div>
    </div>
  );
}

/* ---------- map canvas ---------- */
type Rect = [number, number, number, number];
type Patch = { t: string; polys: string[]; rects: Rect[]; blobs: Rect[]; lines?: string[] };

const patches: Patch[] = [
  {
    t: "translate(620 880) scale(0.33333)",
    polys: [
      "540,60 581,61 577,98 590,100 592,88 605,90 606,102 638,106 632,126 641,134 640,150 630,158 532,154",
      "640,150 647,150 646,168 632,176",
      "677,128 766,128 766,152 682,151 676,140",
      "769,124 888,123 887,136 880,148 769,148",
      "919,128 940,130 942,156 950,157 949,168 943,170 943,248 918,248",
      "616,208 681,208 679,236 616,236 609,222",
      "688,198 800,196 810,190 818,198 827,204 820,230 688,229",
      "803,257 858,257 862,284 797,284 803,272",
      "541,250 572,247 572,306 541,306",
      "702,300 782,299 790,303 864,302 864,343 841,345 839,370 803,369 766,400 768,408 741,430 733,428 666,484 643,465 643,455 682,420 668,404 716,364 727,372 741,362 758,372 788,346 702,341",
      "912,284 930,280 947,276 948,376 913,372",
      "923,385 955,385 955,534 923,528",
      "444,382 458,377 475,384 476,406 444,406",
      "443,412 477,412 477,434 443,434",
      "444,440 478,442 477,464 444,460",
      "445,468 474,468 470,490 458,493 445,486",
      "640,484 652,492 640,502",
      "440,536 482,532 484,523 566,524 564,560 491,561 489,610 483,648 450,652 440,648 441,562 446,550",
      "482,616 505,614 508,624 520,628 518,655 482,655",
      "364,592 405,592 404,610 390,612 386,620 374,620 374,612 364,610",
      "290,622 308,616 326,622 326,660 304,667 286,658",
      "211,733 246,731 248,723 318,724 317,752 246,753 243,762 211,762",
      "280,768 314,768 304,778 280,778",
      "323,800 388,802 395,810 463,810 462,840 393,839 388,830 322,830",
      "358,686 398,682 400,776 349,777 350,748 360,744 352,736 353,710",
      "406,748 505,750 500,778 406,776",
      "595,590 632,574 885,571 885,600 720,604 597,607",
      "624,628 686,634 690,644 776,644 778,634 860,632 876,626 876,664 780,664 778,670 692,670 686,662 625,662",
      "682,714 756,716 758,742 684,744",
      "762,710 802,708 806,704 876,703 878,730 806,733 800,738 762,738",
      "667,790 702,790 706,782 772,782 772,812 705,812 702,820 667,820",
      "777,780 812,778 816,770 884,770 884,800 816,802 812,808 779,808",
      "604,806 644,804 648,818 644,834 604,834",
      "505,866 576,864 578,856 644,856 644,884 578,886 574,896 505,896",
      "284,876 330,874 336,868 352,874 392,878 384,908 298,904 292,962 256,972 250,960 252,902 262,896 284,898",
      "181,900 208,904 210,946 231,950 230,994 218,1018 181,1018",
      "92,1024 132,1022 132,1202 92,1194",
      "138,1020 178,1014 180,1038 194,1040 194,1074 152,1072 138,1064",
      "298,1036 306,1032 315,1040 306,1046",
      "475,926 533,926 533,1050 335,1052 336,1004 442,1002 442,950 474,940",
      "573,922 650,922 652,942 670,944 676,938 720,942 720,967 602,967 600,1030 546,1028 548,942 572,940",
      "272,1060 376,1058 468,1056 468,1084 392,1086 392,1180 232,1180 234,1126 274,1130 272,1142 258,1142 260,1156 342,1156 346,1138 362,1136 362,1104 272,1104 268,1080",
      "298,1208 450,1208 449,1232 354,1232 352,1244 298,1244",
      "362,1258 450,1258 449,1318 432,1322 360,1320 352,1306 362,1296",
      "864,1220 872,1210 883,1212 876,1222",
      "932,612 966,604 966,714 928,714",
      "938,720 976,716 972,846 938,846",
      "950,854 986,852 982,972 948,968",
      "543,311 600,311 600,299 630,299 630,314 641,318 640,325 630,325 628,390 643,392 642,404 605,403 604,462 590,466 574,466 575,404 543,403",
      "1149,1200 1172,1199 1174,1206 1200,1206 1200,1221 1149,1221",
    ],
    rects: [
      [474, 6, 16, 20], [624, 62, 24, 14], [600, 280, 28, 6], [672, 298, 22, 42], [960, 274, 14, 26], [994, 274, 10, 16],
      [964, 386, 38, 16], [880, 396, 14, 18], [517, 440, 30, 16], [338, 541, 70, 31], [450, 513, 24, 12], [572, 514, 15, 28],
      [603, 514, 15, 28], [308, 684, 10, 20], [161, 784, 36, 58], [225, 803, 72, 30], [493, 680, 14, 30], [492, 711, 16, 30],
      [677, 672, 12, 24], [594, 694, 38, 86], [553, 817, 10, 14], [588, 806, 12, 26], [667, 865, 73, 31], [96, 898, 40, 94],
      [138, 1110, 40, 104], [735, 918, 12, 16], [733, 948, 14, 20], [471, 1060, 78, 45], [469, 1186, 26, 10], [852, 511, 14, 16],
      [152, 868, 20, 9], [178, 868, 14, 9], [196, 868, 14, 9], [216, 868, 16, 9], [970, 516, 10, 18], [984, 516, 10, 18],
    ],
    blobs: [
      [523, 143, 8, 8], [826, 150, 28, 8], [904, 120, 22, 4], [897, 200, 8, 20], [665, 246, 18, 28], [892, 295, 10, 66],
      [968, 376, 24, 8], [912, 440, 8, 22], [1007, 452, 4, 9], [960, 514, 6, 22], [998, 512, 5, 14], [488, 382, 6, 50], [509, 458, 31, 16],
      [520, 488, 26, 4], [675, 496, 12, 5], [394, 517, 16, 3], [432, 624, 6, 16], [522, 628, 8, 3], [313, 610, 18, 3], [252, 698, 30, 3],
      [232, 776, 40, 1], [400, 682, 9, 92], [368, 677, 10, 4], [412, 678, 10, 2], [574, 657, 12, 3], [760, 626, 15, 12], [612, 626, 14, 3],
      [741, 676, 16, 4], [642, 718, 10, 10], [634, 736, 22, 3], [642, 748, 10, 12], [875, 728, 8, 4], [906, 739, 20, 2], [904, 794, 24, 18], [923, 812, 5, 34],
      [684, 838, 16, 2], [592, 848, 50, 6], [132, 870, 14, 10], [240, 871, 6, 2], [138, 884, 6, 10], [140, 904, 6, 14], [140, 930, 6, 12], [140, 956, 6, 16], [140, 982, 6, 4],
      [300, 964, 12, 3], [253, 986, 4, 18], [515, 914, 20, 3], [704, 920, 13, 2], [407, 1178, 12, 6], [375, 1194, 12, 4], [386, 1202, 34, 3],
      [222, 1202, 12, 4], [415, 1236, 8, 18], [922, 1232, 10, 3], [918, 606, 10, 74], [922, 868, 14, 5], [923, 901, 14, 46],
      [248, 905, 4, 60],
    ],
  },
  {
    t: "translate(600 660) scale(0.42088 0.33333)",
    polys: [
      "70,78 138,84 134,116 68,112",
      "68,122 90,128 96,122 144,126 134,230 128,237 60,231",
      "90,316 112,316 130,324 126,374 92,372 96,324",
      "62,372 124,376 116,484 54,480",
      "643,118 674,120 672,150 642,152",
      "728,126 811,129 811,150 834,150 834,174 808,174 808,190 728,187",
      "730,210 836,213 832,288 730,284",
      "870,264 893,262 893,284 880,284",
      "530,380 540,374 554,396 546,402",
      "795,384 855,376 856,394 797,403",
      "1181,414 1194,416 1154,765 1140,763 1158,594 1150,592 1162,510 1170,510",
      "470,624 502,628 502,642 488,640",
    ],
    rects: [
      [711, 62, 20, 22], [711, 240, 14, 30], [850, 264, 12, 26], [1147, 159, 27, 21], [1167, 206, 19, 34], [1139, 262, 10, 56],
      [1140, 330, 13, 39], [1148, 404, 21, 34], [1148, 441, 21, 46], [1266, 267, 28, 15], [1409, 310, 13, 34], [1411, 350, 14, 26], [422, 664, 13, 24],
    ],
    blobs: [
      [94, 103, 15, 9], [133, 287, 8, 6], [669, 106, 6, 12], [870, 216, 12, 5], [901, 217, 8, 4], [866, 292, 6, 3], [706, 312, 7, 6],
      [1316, 112, 24, 5], [1263, 229, 5, 5], [1411, 295, 7, 6], [1140, 286, 9, 3],
    ],
    lines: ["1323,146 1328,182", "1339,142 1341,180", "1334,190 1346,270"],
  },
  {
    t: "translate(1240 660) scale(0.33333)",
    polys: [
      "100,70 200,31 235,91 257,83 267,101 176,135 164,116 134,128",
      "334,162 354,153 364,170 342,179",
      "350,182 372,173 388,196 366,207",
      "308,209 323,202 356,245 295,279 271,249 319,226",
      "396,298 448,271 485,320 433,346",
      "318,340 332,336 336,342 322,346",
      "372,396 388,388 392,396 378,402",
      "344,406 354,404 362,416 352,422",
      "362,430 372,424 386,446 376,452",
      "406,438 444,420 458,438 420,456",
      "472,414 494,402 496,390 508,387 528,386 574,452 590,452 598,468 594,474 612,502 558,528 538,500 524,498 516,484 520,478",
      "503,544 543,524 550,532 512,552",
      "86,580 102,574 132,624 120,634",
      "134,614 184,593 194,608 140,626",
      "126,646 178,632 180,638 136,656",
      "84,874 118,871 125,948 91,950",
      "600,126 630,120 640,158 610,162",
      "614,164 646,158 646,168 618,172",
      "668,106 740,93 750,131 654,150 652,140 676,136",
      "752,112 808,100 811,108 756,122",
    ],
    rects: [],
    blobs: [[513, 612, 9, 8], [63, 1021, 8, 6], [856, 986, 15, 7]],
    lines: ["487,482 508,474"],
  },
  {
    t: "translate(1260 980) scale(0.33333)",
    polys: [
      "52,131 94,129 103,270 141,268 149,370 185,368 191,454 78,458",
      "111,493 224,489 226,516 235,524 234,536 228,540 229,562 220,566 226,622 120,622 111,540",
      "151,661 352,652 359,738 156,747",
      "396,550 520,528 531,576 408,598",
      "402,574 525,552",
      "643,729 672,723 682,761 652,767",
      "679,900 698,899 707,977 686,979",
      "204,838 348,831 361,1008 217,1016",
      "125,918 150,913 172,974 150,980",
      "102,654 108,644 120,644 127,656",
    ],
    rects: [[275, 589, 8, 8], [297, 589, 8, 8], [141, 646, 10, 9], [221, 638, 10, 9], [248, 636, 28, 16]],
    blobs: [[528, 526, 14, 4], [112, 796, 9, 7], [277, 634, 7, 6], [676, 895, 6, 5]],
    lines: ["78,487 82,534", "79,487 81,534", "90,540 93,566", "92,572 97,620", "93,572 96,620"],
  },
];

function MapCanvas() {
  return (
    <svg viewBox="274 191 1559 1505" width="1559" height="1505" className="block">
      {patches.map((p) => (
        <g key={p.t} transform={p.t} stroke="#212121" strokeWidth="2.900" strokeLinejoin="round" strokeLinecap="round" fill="#dbad3e">
          {p.polys.map((d) => <polygon key={d} points={d} vectorEffect="non-scaling-stroke" />)}
          {p.rects.map((r, i) => <rect key={i} x={r[0]} y={r[1]} width={r[2]} height={r[3]} vectorEffect="non-scaling-stroke" />)}
          {p.blobs.map((r, i) => <rect key={i} x={r[0]} y={r[1]} width={r[2]} height={r[3]} fill="#212121" vectorEffect="non-scaling-stroke" />)}
          {p.lines?.map((d) => <polyline key={d} points={d} fill="none" strokeWidth="3.800" vectorEffect="non-scaling-stroke" />)}
        </g>
      ))}
      <g transform="translate(620 880) scale(0.33333)" stroke="#212121" strokeWidth="2.900" strokeLinejoin="round" fill="#fff">
        <rect x="571" y="327" width="30" height="62" vectorEffect="non-scaling-stroke" />
        <rect x="463" y="997" width="58" height="15" vectorEffect="non-scaling-stroke" />
        <rect x="533" y="982" width="13" height="33" vectorEffect="non-scaling-stroke" />
      </g>
    </svg>
  );
}

/* ---------- right side ---------- */
const tools: [string, number][] = [
  ["プロット", 65], ["ベクタオーバーレイ", 156], ["ベクタジオメトリ", 142], ["ベクタタイル", 110], ["ベクタテーブル", 123], ["ベクタ一般", 104],
  ["ベクタ解析", 104], ["ベクタ作成", 104], ["ベクタ選択", 104], ["メッシュ", 68], ["ラスタツール", 106], ["ラスタ解析", 101],
  ["ラスタ作成", 101], ["ラスタ地形解析", 148], ["レイヤツール", 106], ["地図製作", 95], ["内挿", 47],
];

function ToolRow({ t, w, icon, down }: { t: string; w: number; icon: React.ReactNode; down?: boolean }) {
  return (
    <div className="flex h-[34px] shrink-0 items-center">
      <div className="flex w-[39px] shrink-0 justify-center">{down ? <Tri /> : <TriR />}</div>
      <div className="flex w-[40px] shrink-0 justify-center">{icon}</div>
      <div className="w-[2px] shrink-0" />
      <Fit w={w}>{t}</Fit>
    </div>
  );
}

const Mag = ({ s = 26 }: { s?: number }) => (
  <I s={s}>
    <circle cx="10" cy="9.500" r="8" stroke="#777" strokeWidth="1.800" />
    <path d="M15.500 15.500l7 7" stroke="#777" strokeWidth="2.400" />
  </I>
);

function Toolbox() {
  return (
    <div className="flex h-[840px] shrink-0 flex-col">
      <div className="flex h-[27px] shrink-0 items-center justify-between pr-[3px] pl-[4px]">
        <Fit w={234}>プロセシングツールボックス</Fit>
        <DockButtons />
      </div>
      <div className="flex h-[39px] shrink-0 items-center pl-[7px]">
        <S><I s={18}><circle cx="7" cy="7" r="5" fill="#a33" stroke="#a33" strokeWidth="3.500" strokeDasharray="2 1.500" /><circle cx="14" cy="19" r="4" fill="#9cb4dc" /><path d="M5 7h19L14 18z" fill="#333" /></I></S>
        <S><I s={18}><path d="M6 10c0-6 2-9 6-9s6 3 6 6l4 3H2z" fill="#3a6a9c" /><path d="M7 14h11v5c0 3-3 4-6 4s-5-1-5-4z" fill="#f6c83c" /><path d="M2 7h21L12 18z" fill="#333" opacity=".85" /></I></S>
        <S><Clock s={17} /></S>
        <S><I s={18}><path d="M4 1h12l4 4v18H4z" fill="#f2f2f2" stroke={G} strokeWidth="1.400" /><path d="M7 7h9M7 11h10M7 15h10M7 19h10" stroke={G} strokeWidth="1.500" /></I></S>
        <SSep c="w-[14px]" />
        <S><I s={17}><Sq x={1} y={1} s={16} /><path d="M20 8l3 2-7 11-3 1 0-4z" fill="#f0dc88" stroke="#8a7a3c" /></I></S>
        <SSep c="w-[14px]" />
        <S><Wrench s={18} /></S>
      </div>
      <div className="flex h-[38px] shrink-0 items-center rounded-[3px] border border-[#a3a3a3] bg-white pl-[13px] text-[#757575]">
        <Mag />
        <div className="w-[9px]" />
        <Fit w={63}>検索...</Fit>
      </div>
      <div className="flex h-[736px] shrink-0 border border-[#a9a9a9] bg-white">
        <div className="flex w-[525px] shrink-0 flex-col overflow-hidden">
          {tools.map(([t, w]) => <ToolRow key={t} t={t} w={w} icon={<QLogo s={28} />} />)}
          <ToolRow t="GDAL" w={59} icon={
            <svg width="32" height="34" viewBox="0 0 32 34"><circle cx="19" cy="19" r="12" fill="#63b4e8" /><path d="M13 10c4-2 9-1 10 2l-4 4-5 1zM24 18l4-2 1 6-4 3z" fill="#5d7a4a" /><path d="M11 12v12M11 14l8 5-8 5" stroke="#c33" fill="none" /><path d="M1 12l7-6 1.500 2-7 6zM10 4l6-4.500 1.500 2-6 4.500z" stroke="#222" fill="#555" /><circle cx="9" cy="6" r="2.500" fill="#222" /><text x="0" y="32" fontSize="14" fontWeight="700" textLength="31" lengthAdjust="spacingAndGlyphs" fontFamily="Open Sans, sans-serif" fill="#000">GDAL</text></svg>
          } />
          <ToolRow t="GRASS" w={71} icon={
            <svg width="26" height="30" viewBox="0 0 26 30" fill="none"><path d="M13 .8l11.500 12.500L13 26.500 1.500 13.300z" fill="#fff" stroke="#222" strokeWidth="1.200" /><path d="M2 17l11 12 11-12" stroke="#222" strokeWidth="1.500" /><path d="M1 28.500h24" stroke="#222" strokeWidth="1.200" /><path d="M13 24V5M13 24L8 10M13 24l6-14M13 24L5 15M13 24l8-9" stroke="#3ba53a" strokeWidth="1.400" /></svg>
          } />
          <ToolRow down t="Project PLATEAU" w={175} icon={<Plateau s={31} />} />
          <div className="flex h-[34px] shrink-0 items-center bg-[#ececec] pl-[84px]"><Gear s={30} /><div className="w-[7px]" /><Fit w={342}>PLATEAU 3D都市モデルを読み込む</Fit></div>
          <div className="flex h-[34px] shrink-0 items-center pl-[84px]"><Gear s={30} /><div className="w-[7px]" /><Fit w={367}>PLATEAU 地形モデルをメッシュとして読</Fit></div>
        </div>
        <div className="flex flex-1 flex-col border-l border-[#a9a9a9]">
          <div className="flex h-[28px] shrink-0 items-center justify-center border-b border-[#b5b5b5] bg-[#f9f9f9]"><TriUp /></div>
          <div className="h-[126px] shrink-0 border-b border-[#b5b5b5] bg-[#e0e0e0]" />
          <div className={"h-[528px] shrink-0 border-b border-[#b5b5b5] " + thumbV} />
          <div className="h-[25px] shrink-0 border-b border-[#b5b5b5] bg-[#e0e0e0]" />
          <div className="flex flex-1 items-center justify-center bg-[#f9f9f9]"><Tri /></div>
        </div>
      </div>
    </div>
  );
}

const attrs: [string, number, string, number][] = [
  ["id", 19, "bldg_d5ab5878-f61a...", 236], ["type", 46, "bldg:Building", 140], ["name", 59, "NULL", 56], ["creationDate", 135, "NULL", 56],
  ["terminationDate", 173, "NULL", 56], ["usage", 62, "NULL", 56], ["yearOfConstruction", 206, "NULL", 56], ["yearOfDemolition", 189, "NULL", 56],
  ["roofType", 93, "NULL", 56], ["measuredHeight", 177, "13.1", 42], ["storeysAboveGrou...", 207, "NULL", 56],
];

function AttrRow({ pad, arrow, k, w, v, vw, bold, alt }: { pad: string; arrow?: "r" | "d"; k: string; w: number; v?: string; vw?: number; bold?: boolean; alt?: boolean }) {
  return (
    <div className={"flex h-8 shrink-0 items-center pt-[2px] " + (alt ? "bg-[#e4e2de]" : "bg-white")}>
      <div className={"flex w-[283px] shrink-0 items-center " + pad}>
        {arrow && <div className="flex w-[20px] shrink-0 items-center pb-[5px]">{arrow === "d" ? <Tri w={15} h={10} /> : <TriR />}</div>}
        <Fit w={w} className={bold ? "font-semibold" : ""}>{k}</Fit>
      </div>
      {v && <Fit w={vw ?? 50}>{v}</Fit>}
    </div>
  );
}

function Results() {
  return (
    <div className="flex flex-1 flex-col">
      <div className="flex h-[12px] shrink-0 items-center justify-center"><div className="h-[2px] w-[16px] bg-[radial-gradient(#999_0.8px,transparent_1px)] bg-[length:3px_2px]" /></div>
      <div className="flex h-[29px] shrink-0 items-center justify-between pr-[3px] pl-[4px]">
        <Fit w={144}>地物情報結果</Fit>
        <DockButtons />
      </div>
      <div className="flex h-[38px] shrink-0 items-center pb-[2px] pl-[7px]">
        <S><I s={17} dim><rect x="2" y="2" width="20" height="20" rx="2" fill="#eee" stroke="#999" /><path d="M5 8h6M5 15h6M13 6h6v5h-6zM13 13h6v5h-6z" stroke="#999" strokeWidth="1.500" /></I></S>
        <SSep c="w-[14px]" />
        <S><TreeDown s={17} /></S>
        <S><TreeUp s={17} /></S>
        <S><TreeDown s={17} star /></S>
        <SSep c="w-[14px]" />
        <S><I s={17}><Sq x={1} y={1} s={13} /><Sq x={6} y={6} s={13} /><rect x="13" y="13" width="10.500" height="10.500" rx="2" fill="#d9413a" /><path d="M15.500 21l5-5" stroke="#fff" strokeWidth="1.600" /></I></S>
        <SSep c="w-[13px]" />
        <S><I s={17} dim><path d="M9 2h8l4 4v11H9zM4 7h8l4 4v11H4z" fill="#fff" stroke="#777" strokeWidth="1.300" /></I></S>
        <S><I s={17} dim><path d="M6 3h12v6H6zM2 9h20v9H2zM6 15h12v7H6z" fill="#bbb" stroke="#777" strokeWidth="1.300" /></I></S>
        <SSep c="w-[14px]" />
        <S><I s={18}><rect x="1" y="1" width="21" height="21" fill="#c3c8d0" stroke="#666" strokeDasharray="2 1.500" /><circle cx="8" cy="8" r="7" fill={B} /><text x="6" y="13" fontSize="12" fontStyle="italic" fontWeight="700" fontFamily="Liberation Serif, serif" fill="#fff">i</text><Cursor /></I></S>
        <div className="flex w-[23px] shrink-0 justify-center"><Tri w={15} /></div>
        <S><I s={18}><path d="M12 11l3-2.500 8 10.500-3.500 3.500z" fill="#e8d070" stroke="#85733a" /><path d="M1 3l5 1 4 5M6 7h17l-8 8z" fill="#333" stroke="#555" /></I></S>
        <SSep c="w-[15px]" />
        <S><HelpBook s={17} /></S>
      </div>
      <div className="flex h-[505px] shrink-0 border border-[#a9a9a9] bg-white">
        <div className="flex w-[525px] shrink-0 flex-col overflow-hidden">
          <div className="flex h-[40px] shrink-0 border-b border-[#a3a3a3] bg-gradient-to-b from-[#fbfbfb] to-[#e4e4e4]">
            <div className="flex w-[279px] shrink-0 items-center border-r border-[#c2c2c2] pt-px pl-[4px]"><Fit w={47}>地物</Fit></div>
            <div className="flex items-center pt-px pl-[4px]"><Fit w={130}>値（Value）</Fit></div>
          </div>
          <AttrRow pad="pl-[2px]" arrow="d" k="Building (LoD1)  [6]" w={207} bold />
          <AttrRow pad="pl-[21px]" arrow="d" k="name" w={60} v="NULL" vw={56} alt />
          <AttrRow pad="pl-[42px]" arrow="r" k="(派生した属性)" w={146} />
          <AttrRow pad="pl-[42px]" arrow="r" k="(アクション)" w={103} alt />
          {attrs.map(([k, w, v, vw], i) => <AttrRow key={i} pad="pl-[60px]" k={k} w={w} v={v} vw={vw} alt={i % 2 === 1} />)}
        </div>
        <div className="flex flex-1 flex-col border-l border-[#a9a9a9]">
          <div className="flex h-[28px] shrink-0 items-center justify-center border-b border-[#b5b5b5] bg-[#f9f9f9]"><TriUp /></div>
          <div className={"h-[81px] shrink-0 border-b border-[#b5b5b5] " + thumbV} />
          <div className="h-[367px] shrink-0 border-b border-[#b5b5b5] bg-[#e0e0e0]" />
          <div className="flex flex-1 items-center justify-center bg-[#f9f9f9]"><Tri /></div>
        </div>
      </div>
      <div className="mt-[5px] flex h-[40px] shrink-0 items-center pl-[5px]">
        <Fit w={56}>モード</Fit>
        <div className="ml-[5px] flex h-[40px] w-[484px] shrink-0 items-center justify-between rounded-[3px] border border-[#a0a0a0] bg-gradient-to-b from-[#fdfdfd] to-[#e9e9e9] pr-[14px] pl-[5px]">
          <Fit w={122}>現在のレイヤ</Fit>
          <Tri />
        </div>
      </div>
      <div className="mt-[3px] flex h-[33px] shrink-0 items-center pl-[5px] text-[#787878]">
        <Fit w={52}>ビュー</Fit>
        <div className="ml-[7px] flex h-[32px] w-[121px] shrink-0 items-center justify-between rounded-[3px] border border-[#bdbdbd] bg-gradient-to-b from-[#f7f7f7] to-[#ececec] pr-[13px] pl-[5px]">
          <Fit w={50}>ツリー</Fit>
          <Tri c="#9a9a9a" />
        </div>
      </div>
    </div>
  );
}

const Spin = () => (
  <div className="flex h-full w-[27px] shrink-0 flex-col items-center justify-center gap-[6px] border-l border-[#b0b0b0] bg-[#f3f3f3]">
    <TriUp />
    <Tri />
  </div>
);

function StatusBar() {
  return (
    <div className="flex h-[45px] shrink-0 items-center text-[20px]">
      <div className="flex h-[38px] w-[259px] shrink-0 items-center rounded-[3px] border border-[#a3a3a3] bg-white pl-[11px] text-[21px] text-[#757575]">
        <Mag s={27} />
        <div className="w-[9px]" />
        <Fit w={157}>検索（Ctrl + K）</Fit>
      </div>
      <div className="w-[894px] shrink-0" />
      <Fit w={40}>座標</Fit>
      <div className="ml-[4px] flex h-[38px] w-[219px] shrink-0 items-center rounded-[3px] border border-[#a3a3a3] bg-white pt-[2px] pl-[3px] font-['Liberation_Sans','Noto_Sans_CJK_JP',sans-serif] text-[#222]"><Fit w={196}>35.6062˚ ,139.75409˚</Fit></div>
      <div className="flex w-[38px] shrink-0 justify-center">
        <svg width="30" height="32" viewBox="0 0 30 32" fill="none" stroke="#111" strokeWidth="1.600"><path d="M9 3c6-3 11 3 13 9s4 15-1 18-11-3-13-10S4 6 9 3z" fill="#fff" strokeWidth="2.200" /><path d="M10 4l8 10M14 3l5 11M9 10l9 4 4-4M8 16c4 3 8 2 10-2M13 20c3-2 7-2 9 0" strokeWidth="2.400" /><circle cx="18" cy="24" r="3" /><path d="M23 4l4-3M25 8l4-2M1 20l4 2M2 26l5-1" /></svg>
      </div>
      <div className="ml-[12px]"><Fit w={40}>縮尺</Fit></div>
      <div className="ml-[4px] flex h-[32px] w-[144px] shrink-0 items-center rounded-[3px] border border-[#a3a3a3] bg-white pl-[3px] font-['Liberation_Sans',sans-serif] text-[#222]">
        <Fit w={58}>1:6803</Fit>
        <div className="ml-auto flex h-full w-[40px] items-center justify-center bg-[#efefef]"><Tri /></div>
      </div>
      <div className="flex w-[50px] shrink-0 justify-center">
        <svg width="25" height="30" viewBox="0 0 25 30"><path d="M5.500 15V8.500a7 7 0 0 1 14 0V15" fill="none" stroke="#8a8a8a" strokeWidth="3.400" /><rect x="0" y="13.500" width="25" height="16.500" rx="2" fill="#555" /></svg>
      </div>
      <Fit w={39}>拡大</Fit>
      <div className="ml-[5px] flex h-[38px] w-[134px] shrink-0 items-center rounded-[3px] border border-[#a3a3a3] bg-white pl-[4px] font-['Liberation_Sans',sans-serif] text-[#222]">
        <Fit w={46}>100%</Fit>
        <div className="ml-auto h-full"><Spin /></div>
      </div>
      <div className="ml-[10px]"><Fit w={41}>回転</Fit></div>
      <div className="ml-[10px] flex h-[38px] w-[119px] shrink-0 items-center rounded-[3px] border border-[#a3a3a3] bg-white pl-[3px] font-['Liberation_Sans','Noto_Sans_CJK_JP',sans-serif] text-[#222]">
        <Fit w={38}>0.0 ˚</Fit>
        <div className="ml-auto h-full"><Spin /></div>
      </div>
      <div className="ml-[7px] flex h-[28px] w-[28px] shrink-0 items-center justify-center border border-[#aaa] bg-white">
        <svg width="22" height="24" viewBox="0 0 22 24" fill="none" stroke="#000" strokeWidth="3.600"><path d="M2.500 12.500l5.500 8L19 2.500" /></svg>
      </div>
      <div className="ml-[9px]"><Fit w={49}>レンダ</Fit></div>
      <div className="ml-[15px] flex shrink-0">
        <I s={28}><GlobeArt c="#666" f="#ddd" /><path d="M4 10l3-6h10l3 6 3 3H1z" fill="#666" stroke="#666" /><path d="M8 5v7M12 4v8M16 5v7" stroke="#ddd" strokeWidth="1.200" /></I>
      </div>
      <div className="ml-px pt-[2px] font-['Liberation_Sans',sans-serif] text-[#222]"><Fit w={99}>EPSG:4326</Fit></div>
      <div className="ml-[36px] flex shrink-0">
        <I s={29}><path d="M12 1C5 1 .5 5 .5 10.500S5 20 12 20l2-.2c2 1.500 4 3 8 3.500-1.500-1.500-2-3.500-2-5 2.500-2 3.500-4.500 3.500-7.800C23.500 5 19 1 12 1z" fill="#5b5b5b" /><circle cx="6.500" cy="10.500" r="1.700" fill="#fff" /><circle cx="12" cy="10.500" r="1.700" fill="#fff" /><circle cx="17.500" cy="10.500" r="1.700" fill="#fff" /></I>
      </div>
    </div>
  );
}

const menus: [string, string, number][] = [
  ["プロジェクト", "J", 124], ["編集", "E", 74], ["ビュー", "V", 75], ["レイヤ", "L", 78], ["設定", "S", 74], ["プラグイン", "P", 113], ["ベクタ", "O", 87],
  ["ラスタ", "R", 81], ["データベース", "D", 135], ["Web", "W", 84], ["メッシュ", "M", 103], ["プロセシング", "C", 138], ["ヘルプ", "H", 88],
];

export default function App() {
  return (
    <div className="flex h-[1742px] w-[2408px] overflow-hidden bg-[linear-gradient(to_bottom,#7d9bb5_0px,#7d9bb5_403px,#6f7f8c_403px,#6f7f8c_406px,#c6c6c6_406px)] font-['Open_Sans','Noto_Sans_CJK_JP',sans-serif] text-[22px] leading-[1.2] text-black">
      <div className="mt-px flex h-[1741px] w-[2403px] shrink-0 flex-col overflow-hidden rounded-tl-[10px] rounded-tr-[14px] rounded-br-[14px] border-t-2 border-r-2 border-[#74899a] bg-[#eeeeee]">
        <div className="flex h-[56px] shrink-0 items-center bg-[#ebf0f9] pl-[7px]">
          <QLogo s={31} />
          <div className="w-[7px]" />
          <Fit w={271} className="text-[23px]">*無題のプロジェクト — QGIS</Fit>
          <div className="ml-auto flex items-center pr-[36px]">
            <div className="h-[2px] w-5 bg-black" />
            <div className="ml-[71px] h-5 w-5 rounded-[3px] border-2 border-black" />
            <svg className="ml-[73px]" width="21" height="21" viewBox="0 0 21 21" stroke="#000" strokeWidth="1.800"><path d="M.5.5l20 20M20.500.5l-20 20" /></svg>
          </div>
        </div>
        <div className="flex h-[37px] shrink-0 items-center gap-[20.700px] border-b border-[#cfcfcf] pt-[2px] pl-[10px]">
          {menus.map(([t, k, w]) => (
            <Fit key={k} w={w} className="text-[23px]">
              {t}(<span className="underline decoration-1 underline-offset-[3px]">{k}</span>)
            </Fit>
          ))}
        </div>
        <ToolbarOne />
        <ToolbarTwo />
        <div className="flex h-[1506px] shrink-0">
          <div className="flex w-[261px] shrink-0 flex-col">
            <BrowserDock />
            <LayersDock />
          </div>
          <div className="w-[12px] shrink-0" />
          <div className="shrink-0 border-r border-b border-l border-[#a9a9a9] bg-white"><MapCanvas /></div>
          <div className="w-[12px] shrink-0" />
          <div className="flex w-[555px] shrink-0 flex-col">
            <Toolbox />
            <Results />
          </div>
        </div>
        <StatusBar />
      </div>
    </div>
  );
}
